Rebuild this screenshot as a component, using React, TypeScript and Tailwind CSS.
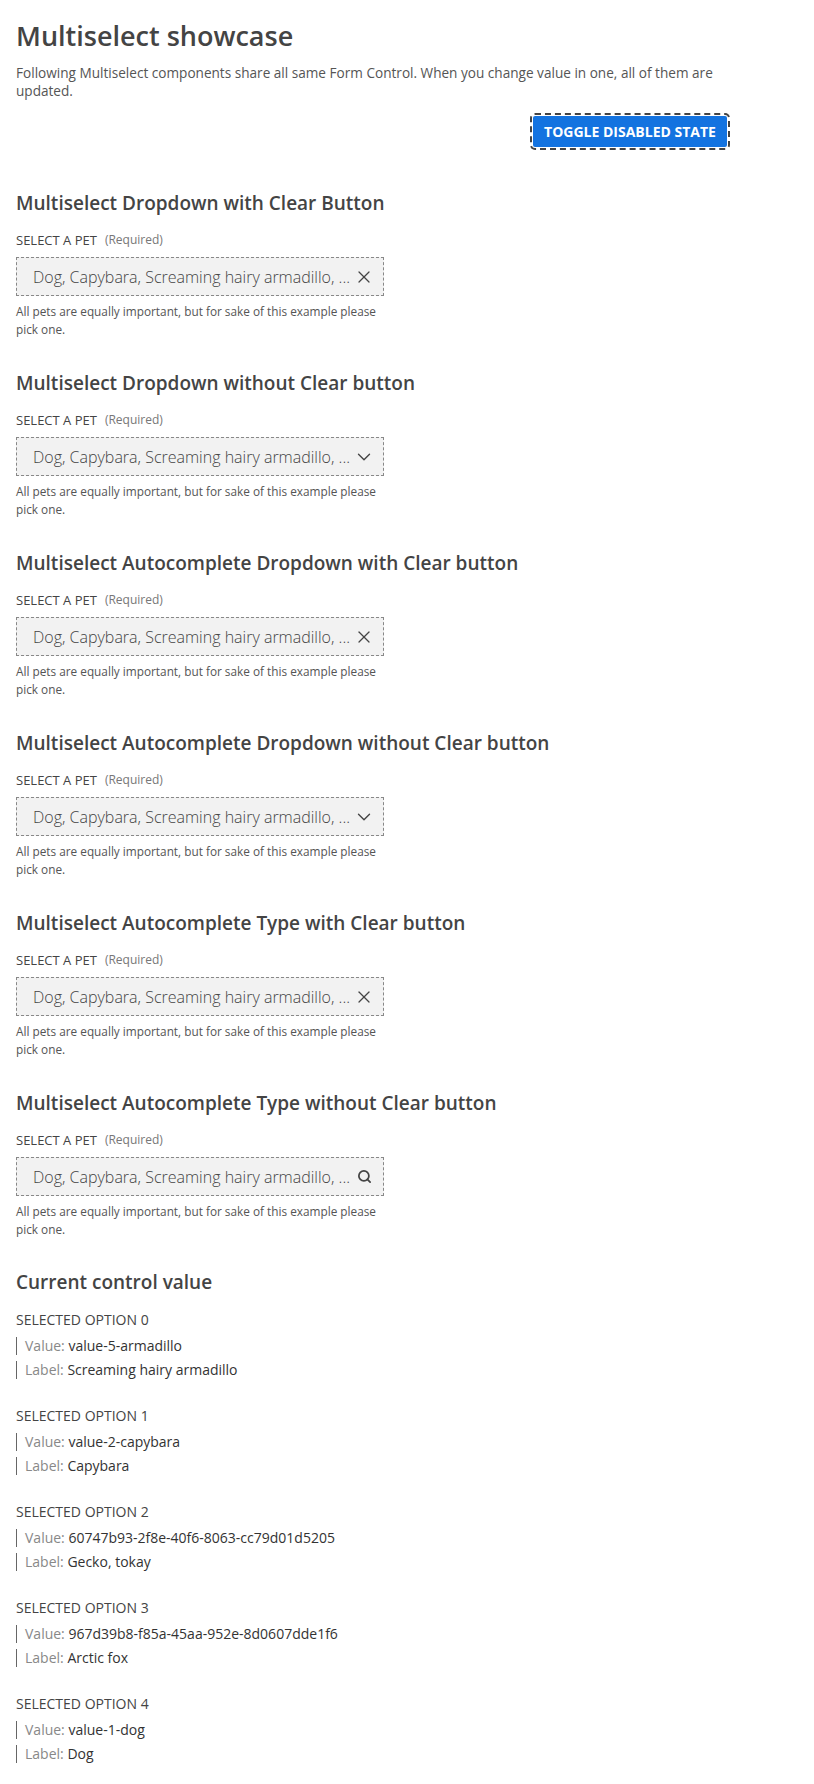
import { X, ChevronDown, Search } from "lucide-react";

const font = { fontFamily: '"Open Sans", "Noto Sans", sans-serif' };

type Kind = "clear" | "chevron" | "search";

const sections: { title: string; icon: Kind }[] = [
  { title: "Multiselect Dropdown with Clear Button", icon: "clear" },
  { title: "Multiselect Dropdown without Clear button", icon: "chevron" },
  { title: "Multiselect Autocomplete Dropdown with Clear button", icon: "clear" },
  { title: "Multiselect Autocomplete Dropdown without Clear button", icon: "chevron" },
  { title: "Multiselect Autocomplete Type with Clear button", icon: "clear" },
  { title: "Multiselect Autocomplete Type without Clear button", icon: "search" },
];

const selected = [
  { value: "value-5-armadillo", label: "Screaming hairy armadillo" },
  { value: "value-2-capybara", label: "Capybara" },
  { value: "60747b93-2f8e-40f6-8063-cc79d01d5205", label: "Gecko, tokay" },
  { value: "967d39b8-f85a-45aa-952e-8d0607dde1f6", label: "Arctic fox" },
  { value: "value-1-dog", label: "Dog" },
];

function FieldIcon({ kind }: { kind: Kind }) {
  return (
    <span className="w-[22px] flex justify-center">
      {kind === "clear" && <X size={20} strokeWidth={1.5} />}
      {kind === "chevron" && <ChevronDown size={22} strokeWidth={1.5} />}
      {kind === "search" && <Search size={15} strokeWidth={2.8} />}
    </span>
  );
}

function Multiselect({ title, icon }: { title: string; icon: Kind }) {
  return (
    <section className="mt-[33px]">
      <h2 className="text-[19px] leading-[24px] font-semibold text-[#444]">{title}</h2>
      <div className="mt-[16px] flex items-center leading-[18px]">
        <span className="text-[13px] uppercase text-[#444]">Select a pet</span>
        <span className="ml-2 text-[12px] text-[#777]">(Required)</span>
      </div>
      <div className="mt-[8px] w-[368px] h-[39px] flex items-center justify-between border border-dashed border-[#888] bg-[#f2f2f2] pl-4 pr-[8px] text-[#444]">
        <span className="text-[16px] font-light truncate">
          Dog, Capybara, Screaming hairy armadillo, ...
        </span>
        <FieldIcon kind={icon} />
      </div>
      <p className="mt-[6px] w-[368px] text-[11.8px] leading-[18px] text-[#555]">
        All pets are equally important, but for sake of this example please pick one.
      </p>
    </section>
  );
}

export default function App() {
  return (
    <main className="bg-white w-[814px] min-h-[1784px] pl-4 pt-[18px] pb-8" style={font}>
      <div className="w-[714px]">
        <h1 className="text-[27px] leading-[36px] font-semibold text-[#444]">Multiselect showcase</h1>
        <p className="mt-[10px] text-[13.6px] leading-[18px] text-[#555]">
          Following Multiselect components share all same Form Control. When you change value in one, all of
          them are updated.
        </p>
        <div className="mt-[16px] flex justify-end pr-[3px]">
          <button className="h-[31px] w-[194px] rounded-[2px] bg-[#1373e0] text-white text-[14px] font-bold uppercase outline-2 outline-dashed outline-offset-1 outline-[#444]">
            Toggle disabled state
          </button>
        </div>
        <div className="mt-[11px] flex flex-col">
          {sections.map((s) => (
            <Multiselect key={s.title} title={s.title} icon={s.icon} />
          ))}
        </div>
        <section className="mt-[32px]">
          <h2 className="text-[19px] leading-[24px] font-semibold text-[#444]">Current control value</h2>
          <div className="mt-[17px] flex flex-col gap-[28px]">
            {selected.map((o, i) => (
              <div key={i}>
                <div className="text-[14px] leading-[18px] uppercase text-[#444]">Selected option {i}</div>
                <div className="mt-[8px] border-l border-[#666] pl-2 text-[14px] leading-[18px]">
                  <span className="text-[#888]">Value: </span>
                  <span className="text-[#333]">{o.value}</span>
                </div>
                <div className="mt-[6px] border-l border-[#666] pl-2 text-[14px] leading-[18px]">
                  <span className="text-[#888]">Label: </span>
                  <span className="text-[#333]">{o.label}</span>
                </div>
              </div>
            ))}
          </div>
        </section>
      </div>
    </main>
  );
}
